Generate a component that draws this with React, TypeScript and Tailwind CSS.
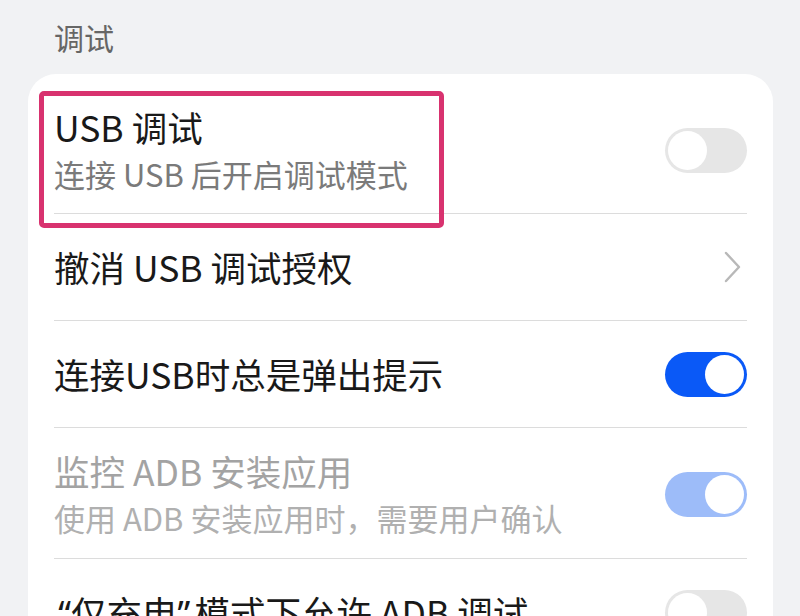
import React from "react";

const font = { fontFamily: '"Noto Sans CJK SC", "Noto Sans", sans-serif' };
const latin = { fontFamily: '"Noto Sans", sans-serif' };

function Toggle({ state }: { state: "off" | "on" | "dim" }) {
  const track =
    state === "on" ? "bg-[#0a59f7]" : state === "dim" ? "bg-[#9dbcf9]" : "bg-[#e6e6e6]";
  return (
    <div
      className={
        "flex h-[45px] w-[82px] shrink-0 items-center rounded-full p-[3px] " +
        track +
        (state === "off" ? " justify-start" : " justify-end")
      }
    >
      <div className="h-[39px] w-[39px] rounded-full bg-white" />
    </div>
  );
}

function Chevron() {
  return (
    <svg width="20" height="34" viewBox="0 0 20 34" className="shrink-0 mr-[4px]">
      <path d="M3 3 L16 17 L3 31" fill="none" stroke="#b8b8b8" strokeWidth="2.4" strokeLinecap="round" strokeLinejoin="round" />
    </svg>
  );
}

export default function App() {
  return (
    <div className="w-[800px] h-[616px] overflow-hidden bg-[#f1f2f4]" style={font}>
      <div className="flex h-[74px] items-center pl-[54px] text-[30px] text-[#666666]">调试</div>
      <div className="relative ml-[28px] w-[745px] rounded-[28px] bg-white px-[26px] pt-[10px]">
        {/* highlight annotation */}
        <div className="pointer-events-none absolute left-[11px] top-[17px] h-[137px] w-[405px] rounded-[5px] border-[5px] border-[#d8326f]" />

        <div className="flex items-center justify-between pt-[19px] pb-[16px]">
          <div>
            <div className="text-[35.5px] leading-[48px] text-[#191919]">USB 调试</div>
            <div className="text-[31px] leading-[46px] text-[#7a7a7a]">连接 USB 后开启调试模式</div>
          </div>
          <Toggle state="off" />
        </div>

        <div className="flex h-[107px] items-center justify-between border-t border-[#dcdcdc]">
          <div className="text-[35.5px] leading-[48px] text-[#191919]">撤消 USB 调试授权</div>
          <Chevron />
        </div>

        <div className="flex h-[107px] items-center justify-between border-t border-[#dcdcdc]">
          <div className="text-[35.5px] leading-[48px] text-[#191919]">连接USB时总是弹出提示</div>
          <Toggle state="on" />
        </div>

        <div className="flex items-center justify-between border-t border-[#dcdcdc] pt-[19px] pb-[17px]">
          <div>
            <div className="text-[35.5px] leading-[48px] text-[#a3a3a3]">监控 ADB 安装应用</div>
            <div className="text-[31px] leading-[46px] text-[#b0b0b0]">使用 ADB 安装应用时，需要用户确认</div>
          </div>
          <Toggle state="dim" />
        </div>

        <div className="flex h-[107px] items-center justify-between border-t border-[#dcdcdc]">
          <div className="text-[35.5px] leading-[48px] text-[#191919]">
            <span className="inline-block w-[17px] text-right" style={latin}>“</span>仅充电
            <span className="inline-block w-[17px] text-left" style={latin}>”</span>模式下允许 ADB 调试
          </div>
          <Toggle state="off" />
        </div>
      </div>
    </div>
  );
}
